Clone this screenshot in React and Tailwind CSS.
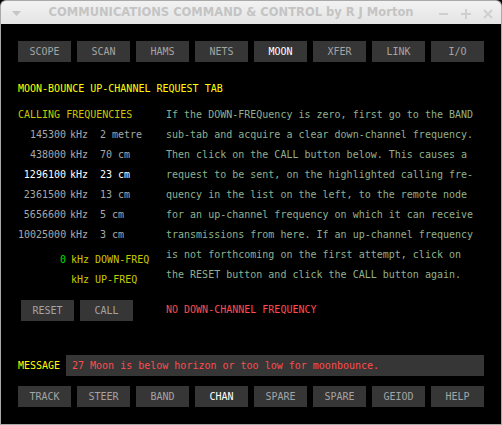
import React from 'react';

const mono = { fontFamily: '"DejaVu Sans Mono", monospace' };

const topTabs = ['SCOPE', 'SCAN', 'HAMS', 'NETS', 'MOON', 'XFER', 'LINK', 'I/O'];
const bottomTabs = ['TRACK', 'STEER', 'BAND', 'CHAN', 'SPARE', 'SPARE', 'GEIOD', 'HELP'];

const freqs = [
  { f: '145300', band: '2 metre' },
  { f: '438000', band: '70 cm' },
  { f: '1296100', band: '23 cm', active: true },
  { f: '2361500', band: '13 cm' },
  { f: '5656600', band: '5 cm' },
  { f: '10025000', band: '3 cm' },
];

const help = [
  'If the DOWN-FREQuency is zero, first go to the BAND',
  'sub-tab and acquire a clear down-channel frequency.',
  'Then click on the CALL button below. This causes a',
  'request to be sent, on the highlighted calling fre-',
  'quency in the list on the left, to the remote node',
  'for an up-channel frequency on which it can receive',
  'transmissions from here. If an up-channel frequency',
  'is not forthcoming on the first attempt, click on',
  'the RESET button and click the CALL button again.',
];

const TabRow = ({ tabs, active }) => (
  <div className="flex gap-[6px]">
    {tabs.map((t, i) => (
      <div
        key={i}
        className={`w-[53px] h-[21px] bg-[#363636] flex items-center justify-center text-[10px] ${
          t === active ? 'text-white' : 'text-[#a4a4a4]'
        }`}
      >
        {t}
      </div>
    ))}
  </div>
);

export default function App() {
  return (
    <div className="w-[502px] h-[425px] flex flex-col bg-black">
      {/* title bar */}
      <div className="h-[24px] shrink-0 rounded-t-[6px] border border-b-0 border-[#a9a9a9] bg-gradient-to-b from-[#f2f2f2] to-[#e4e4e4] flex items-center relative">
        <svg className="absolute left-[11px] top-[10px]" width="9" height="6" viewBox="0 0 9 6">
          <path d="M0 0 L9 0 L4.5 5 Z" fill="#c6c6c6" />
        </svg>
        <div
          className="w-full text-center text-[11.5px] font-bold text-[#c4c4c4] pr-[40px]"
          style={{ fontFamily: '"DejaVu Sans", sans-serif' }}
        >
          COMMUNICATIONS COMMAND &amp; CONTROL by R J Morton
        </div>
        <svg className="absolute left-[438px] top-[8px]" width="58" height="10" viewBox="0 0 58 10">
          <rect x="0" y="4" width="9" height="2" fill="#cfcfcf" />
          <rect x="22" y="4" width="10" height="2" fill="#cfcfcf" />
          <rect x="26" y="0" width="2" height="10" fill="#cfcfcf" />
          <path d="M45 1 L53 9 M53 1 L45 9" stroke="#cfcfcf" strokeWidth="2" />
        </svg>
      </div>

      {/* body */}
      <div className="flex-1 border-x border-b border-[#a9a9a9] bg-black px-[17px] pt-[17px]" style={mono}>
        <TabRow tabs={topTabs} active="MOON" />

        <div className="mt-[17px] leading-[20px] text-[10px] text-[#ffff00]">MOON-BOUNCE UP-CHANNEL REQUEST TAB</div>

        <div className="mt-[6px] flex text-[10px] leading-[20px]">
          <div className="w-[148px] shrink-0">
            <div className="text-[#c8c800]">CALLING FREQUENCIES</div>
            {freqs.map((r) => (
              <div key={r.f} className={`flex whitespace-pre ${r.active ? 'text-white' : 'text-[#a8a8a8]'}`}>
                <span className="w-[48px] text-right">{r.f}</span>
                <span className="ml-[4px] w-[30px]">kHz</span>
                <span>{r.band}</span>
              </div>
            ))}
            <div className="mt-[5px] flex whitespace-pre">
              <span className="w-[48px] text-right text-[#00e000]">0</span>
              <span className="ml-[5px] text-[#c8c800]">kHz DOWN-FREQ</span>
            </div>
            <div className="flex whitespace-pre">
              <span className="w-[48px]" />
              <span className="ml-[5px] text-[#c8c800]">kHz UP-FREQ</span>
            </div>
            <div className="mt-[10px] ml-[3px] flex gap-[6px]">
              <div className="w-[53px] h-[21px] bg-[#363636] flex items-center justify-center text-[#a4a4a4]">RESET</div>
              <div className="w-[53px] h-[21px] bg-[#363636] flex items-center justify-center text-[#a4a4a4]">CALL</div>
            </div>
          </div>
          <div className="flex-1">
            <div className="text-[#8fb08f]">
              {help.map((l, i) => (
                <div key={i} className="whitespace-pre">{l}</div>
              ))}
            </div>
            <div className="mt-[15px] text-[#ff4c4c]">NO DOWN-CHANNEL FREQUENCY</div>
          </div>
        </div>

        <div className="mt-[34px] flex items-center text-[10px]">
          <div className="w-[48px] text-[#ffff00]">MESSAGE</div>
          <div className="flex-1 h-[21px] bg-[#363636] flex items-center pl-[6px] text-[#ff4c4c]">
            27 Moon is below horizon or too low for moonbounce.
          </div>
        </div>

        <div className="mt-[10px]">
          <TabRow tabs={bottomTabs} active="CHAN" />
        </div>
      </div>
    </div>
  );
}
